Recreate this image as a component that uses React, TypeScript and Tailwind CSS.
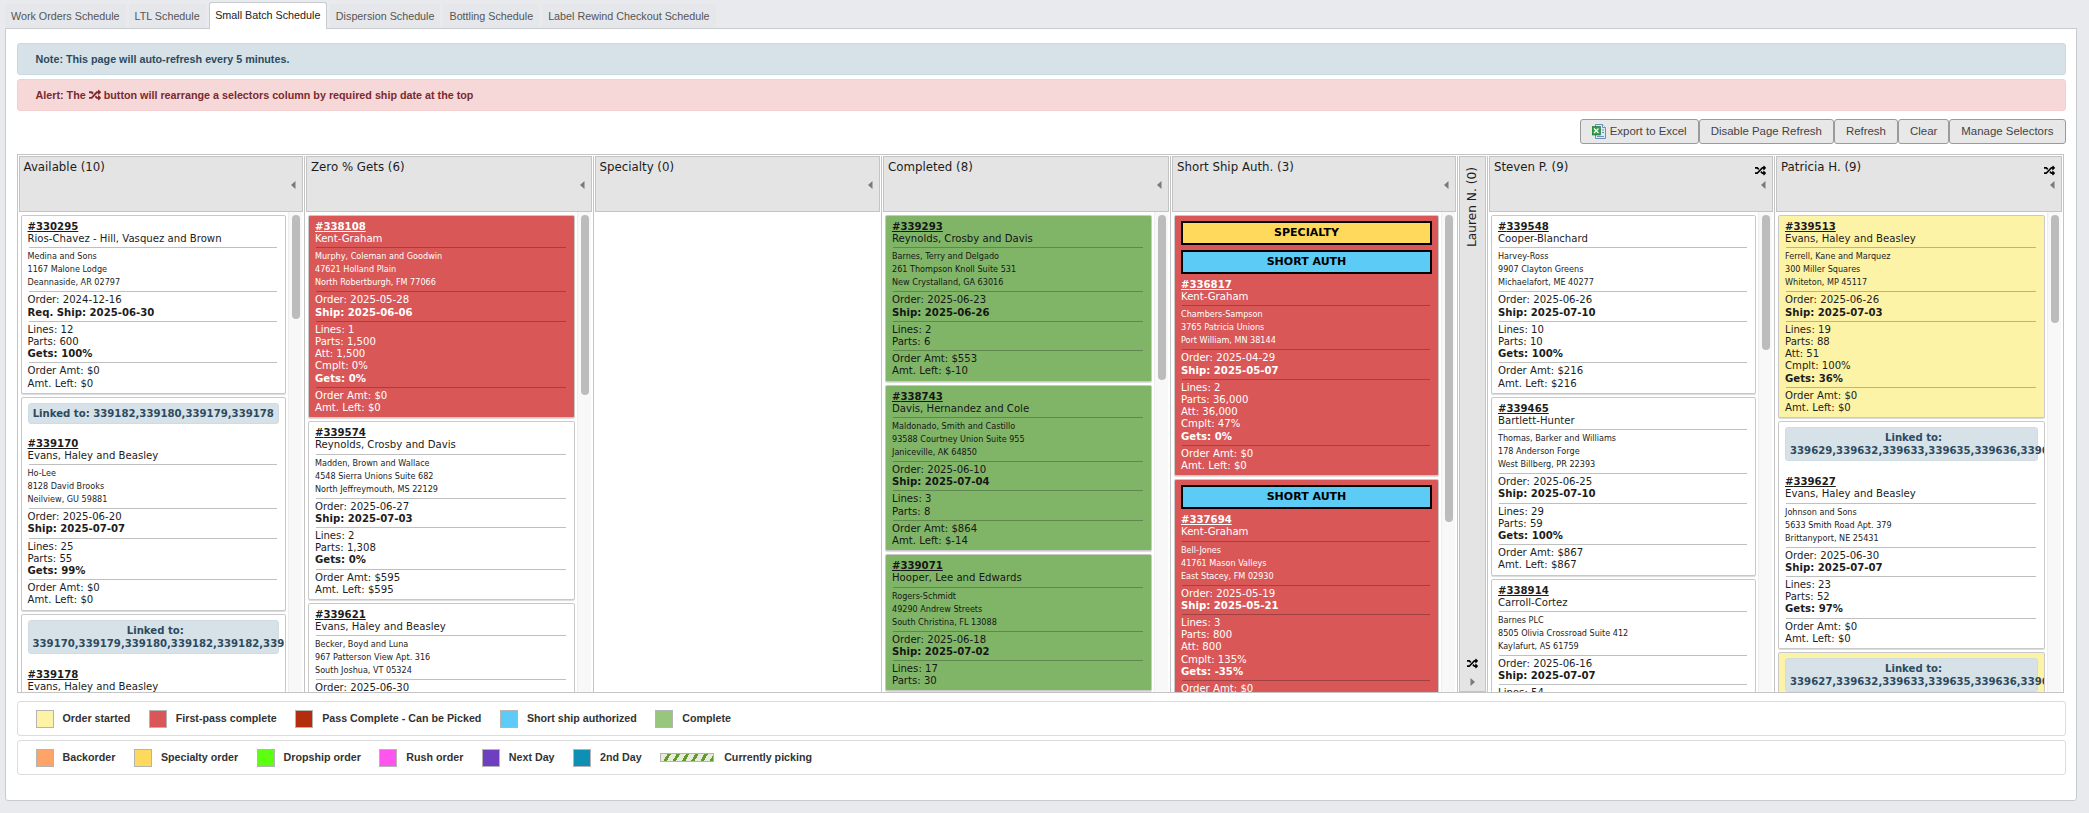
import { FaRandom } from 'react-icons/fa'

type Tone = 'plain' | 'red' | 'green' | 'yellow'

interface Order {
  id: string
  name?: string
  addr?: string[]
  order?: string
  ship?: string
  reqShip?: string
  stats?: string[]
  gets?: string
  amt?: string
  left?: string
  tone?: Tone
  badges?: ('specialty' | 'short')[]
  linked?: string
  linkedWrap?: string
  linkedOnly?: boolean
}

interface Column {
  title: string
  width: string
  shuffle?: boolean
  thumb?: string
  orders: Order[]
}

const tabs = [
  'Work Orders Schedule',
  'LTL Schedule',
  'Small Batch Schedule',
  'Dispersion Schedule',
  'Bottling Schedule',
  'Label Rewind Checkout Schedule',
]

const toneClass: Record<Tone, string> = {
  plain: 'bg-white text-[#1c1c1c]',
  red: 'bg-[#d95757] text-white',
  green: 'bg-[#80b567] text-[#161616]',
  yellow: 'bg-[#fdf3a6] text-[#1c1c1c]',
}

const left: Order[] = [
  {
    id: '330295',
    name: 'Rios-Chavez - Hill, Vasquez and Brown',
    addr: ['Medina and Sons', '1167 Malone Lodge', 'Deannaside, AR 02797'],
    order: '2024-12-16',
    reqShip: '2025-06-30',
    stats: ['Lines: 12', 'Parts: 600'],
    gets: '100%',
    amt: '$0',
    left: '$0',
  },
  {
    id: '339170',
    linked: '339182,339180,339179,339178',
    name: 'Evans, Haley and Beasley',
    addr: ['Ho-Lee', '8128 David Brooks', 'Neilview, GU 59881'],
    order: '2025-06-20',
    ship: '2025-07-07',
    stats: ['Lines: 25', 'Parts: 55'],
    gets: '99%',
    amt: '$0',
    left: '$0',
  },
  {
    id: '339178',
    linkedWrap: '339170,339179,339180,339182,339182,3391',
    name: 'Evans, Haley and Beasley',
  },
]

const zero: Order[] = [
  {
    id: '338108',
    tone: 'red',
    name: 'Kent-Graham',
    addr: ['Murphy, Coleman and Goodwin', '47621 Holland Plain', 'North Robertburgh, FM 77066'],
    order: '2025-05-28',
    ship: '2025-06-06',
    stats: ['Lines: 1', 'Parts: 1,500', 'Att: 1,500', 'Cmplt: 0%'],
    gets: '0%',
    amt: '$0',
    left: '$0',
  },
  {
    id: '339574',
    name: 'Reynolds, Crosby and Davis',
    addr: ['Madden, Brown and Wallace', '4548 Sierra Unions Suite 682', 'North Jeffreymouth, MS 22129'],
    order: '2025-06-27',
    ship: '2025-07-03',
    stats: ['Lines: 2', 'Parts: 1,308'],
    gets: '0%',
    amt: '$595',
    left: '$595',
  },
  {
    id: '339621',
    name: 'Evans, Haley and Beasley',
    addr: ['Becker, Boyd and Luna', '967 Patterson View Apt. 316', 'South Joshua, VT 05324'],
    order: '2025-06-30',
  },
]

const completed: Order[] = [
  {
    id: '339293',
    tone: 'green',
    name: 'Reynolds, Crosby and Davis',
    addr: ['Barnes, Terry and Delgado', '261 Thompson Knoll Suite 531', 'New Crystalland, GA 63016'],
    order: '2025-06-23',
    ship: '2025-06-26',
    stats: ['Lines: 2', 'Parts: 6'],
    amt: '$553',
    left: '$-10',
  },
  {
    id: '338743',
    tone: 'green',
    name: 'Davis, Hernandez and Cole',
    addr: ['Maldonado, Smith and Castillo', '93588 Courtney Union Suite 955', 'Janiceville, AK 64850'],
    order: '2025-06-10',
    ship: '2025-07-04',
    stats: ['Lines: 3', 'Parts: 8'],
    amt: '$864',
    left: '$-14',
  },
  {
    id: '339071',
    tone: 'green',
    name: 'Hooper, Lee and Edwards',
    addr: ['Rogers-Schmidt', '49290 Andrew Streets', 'South Christina, FL 13088'],
    order: '2025-06-18',
    ship: '2025-07-02',
    stats: ['Lines: 17', 'Parts: 30'],
  },
]

const shortShip: Order[] = [
  {
    id: '336817',
    tone: 'red',
    badges: ['specialty', 'short'],
    name: 'Kent-Graham',
    addr: ['Chambers-Sampson', '3765 Patricia Unions', 'Port William, MN 38144'],
    order: '2025-04-29',
    ship: '2025-05-07',
    stats: ['Lines: 2', 'Parts: 36,000', 'Att: 36,000', 'Cmplt: 47%'],
    gets: '0%',
    amt: '$0',
    left: '$0',
  },
  {
    id: '337694',
    tone: 'red',
    badges: ['short'],
    name: 'Kent-Graham',
    addr: ['Bell-Jones', '41761 Mason Valleys', 'East Stacey, FM 02930'],
    order: '2025-05-19',
    ship: '2025-05-21',
    stats: ['Lines: 3', 'Parts: 800', 'Att: 800', 'Cmplt: 135%'],
    gets: '-35%',
    amt: '$0',
  },
]

const steven: Order[] = [
  {
    id: '339548',
    name: 'Cooper-Blanchard',
    addr: ['Harvey-Ross', '9907 Clayton Greens', 'Michaelafort, ME 40277'],
    order: '2025-06-26',
    ship: '2025-07-10',
    stats: ['Lines: 10', 'Parts: 10'],
    gets: '100%',
    amt: '$216',
    left: '$216',
  },
  {
    id: '339465',
    name: 'Bartlett-Hunter',
    addr: ['Thomas, Barker and Williams', '178 Anderson Forge', 'West Billberg, PR 22393'],
    order: '2025-06-25',
    ship: '2025-07-10',
    stats: ['Lines: 29', 'Parts: 59'],
    gets: '100%',
    amt: '$867',
    left: '$867',
  },
  {
    id: '338914',
    name: 'Carroll-Cortez',
    addr: ['Barnes PLC', '8505 Olivia Crossroad Suite 412', 'Kaylafurt, AS 61759'],
    order: '2025-06-16',
    ship: '2025-07-07',
    stats: ['Lines: 54'],
  },
]

const patricia: Order[] = [
  {
    id: '339513',
    tone: 'yellow',
    name: 'Evans, Haley and Beasley',
    addr: ['Ferrell, Kane and Marquez', '300 Miller Squares', 'Whiteton, MP 45117'],
    order: '2025-06-26',
    ship: '2025-07-03',
    stats: ['Lines: 19', 'Parts: 88', 'Att: 51', 'Cmplt: 100%'],
    gets: '36%',
    amt: '$0',
    left: '$0',
  },
  {
    id: '339627',
    linkedWrap: '339629,339632,339633,339635,339636,3396',
    name: 'Evans, Haley and Beasley',
    addr: ['Johnson and Sons', '5633 Smith Road Apt. 379', 'Brittanyport, NE 25431'],
    order: '2025-06-30',
    ship: '2025-07-07',
    stats: ['Lines: 23', 'Parts: 52'],
    gets: '97%',
    amt: '$0',
    left: '$0',
  },
  {
    id: '339629',
    tone: 'yellow',
    linkedOnly: true,
    linkedWrap: '339627,339632,339633,339635,339636,3396',
  },
]

const columns: Column[] = [
  { title: 'Available (10)', width: 'w-[287.5px]', thumb: 'h-[104px]', orders: left },
  { title: 'Zero % Gets (6)', width: 'w-[288.5px]', thumb: 'h-[180px]', orders: zero },
  { title: 'Specialty (0)', width: 'w-[288.5px]', orders: [] },
  { title: 'Completed (8)', width: 'w-[289px]', thumb: 'h-[165px]', orders: completed },
  { title: 'Short Ship Auth. (3)', width: 'w-[287px]', thumb: 'h-[307px]', orders: shortShip },
]

const rightColumns: Column[] = [
  { title: 'Steven P. (9)', width: 'w-[287px]', shuffle: true, thumb: 'h-[135px]', orders: steven },
  { title: 'Patricia H. (9)', width: 'w-[288px]', shuffle: true, thumb: 'h-[108px]', orders: patricia },
]

function Arrow({ dir = 'left' }: { dir?: 'left' | 'right' }) {
  return (
    <svg width="5" height="8" viewBox="0 0 5 8" className="block">
      <path d={dir === 'left' ? 'M4.5 0v8L0 4z' : 'M.5 0v8L5 4z'} fill="#7a7a7a" />
    </svg>
  )
}

function Rule() {
  return <div className="ml-px mr-[2px] my-[2px] border-t border-black/25" />
}

function OrderCard({ o }: { o: Order }) {
  const tone = o.tone ?? 'plain'
  return (
    <div
      className={`shrink-0 overflow-hidden rounded-[2px] border border-[#c9c9c9] px-[6px] pt-[5px] pb-[3px] text-[10.15px] leading-[12.2px] shadow-[0_1px_1px_rgba(0,0,0,0.15)] ${toneClass[tone]}`}
    >
      {o.badges?.map((b) => (
        <div
          key={b}
          className={`mb-[5px] flex h-[24px] items-center justify-center border-2 border-black text-[11px] font-bold text-black ${b === 'specialty' ? 'bg-[#ffd95c]' : 'bg-[#5ccbf5]'}`}
        >
          {b === 'specialty' ? 'SPECIALTY' : 'SHORT AUTH'}
        </div>
      ))}
      {o.linked && (
        <div className="mb-[14px] rounded-[3px] border border-[#cfdde3] bg-[#d6e2e7] py-[3px] text-center font-bold leading-[13px] whitespace-nowrap text-[#2d4a5f]">
          Linked to: {o.linked}
        </div>
      )}
      {o.linkedWrap && (
        <div className="mb-[15px] rounded-[3px] border border-[#cfdde3] bg-[#d6e2e7] py-[3px] pl-[4px] font-bold leading-[13px] whitespace-nowrap text-[#2d4a5f]">
          <div className="text-center">Linked to:</div>
          <div>{o.linkedWrap}</div>
        </div>
      )}
      {!o.linkedOnly && (
        <>
          <a className="block font-bold underline">#{o.id}</a>
          <div>{o.name}</div>
        </>
      )}
      {o.addr && (
        <>
          <Rule />
          <div className="text-[8.1px] leading-[13px]">
            {o.addr.map((line) => (
              <div key={line}>{line}</div>
            ))}
          </div>
        </>
      )}
      {o.order && (
        <>
          <Rule />
          <div>Order: {o.order}</div>
        </>
      )}
      {o.reqShip && <div className="font-bold">Req. Ship: {o.reqShip}</div>}
      {o.ship && <div className="font-bold">Ship: {o.ship}</div>}
      {o.stats && <Rule />}
      {o.stats?.map((s) => (
        <div key={s}>{s}</div>
      ))}
      {o.gets && <div className="font-bold">Gets: {o.gets}</div>}
      {o.amt && (
        <>
          <Rule />
          <div>Order Amt: {o.amt}</div>
          {o.left && <div>Amt. Left: {o.left}</div>}
        </>
      )}
    </div>
  )
}

function BoardColumn({ col }: { col: Column }) {
  return (
    <div className={`flex shrink-0 flex-col border-r border-[#c4c4c4] last:border-r-0 ${col.width}`}>
      <div className="mx-px flex h-[56px] shrink-0 justify-between border border-[#c4c4c4] bg-[#e4e4e4] pl-[4px] pr-[6px] pt-[3px] text-[11.8px] leading-[14px] text-[#1c1c1c]">
        <span>{col.title}</span>
        <div className="flex flex-col items-end">
          {col.shuffle ? (
            <FaRandom className="mt-[5px] text-[11px] text-black" />
          ) : (
            <span className="h-[16px]" />
          )}
          <span className="mt-[5px] block">
            <Arrow />
          </span>
        </div>
      </div>
      <div className="flex min-h-0 flex-1 overflow-hidden pl-[3px]">
        <div className="flex min-w-0 flex-1 flex-col gap-[3px] overflow-hidden pt-[3px]">
          {col.orders.map((o) => (
            <OrderCard key={o.id} o={o} />
          ))}
        </div>
        {col.thumb && (
          <div className="ml-[2px] mr-[2px] w-[14px] shrink-0 border-l border-[#eeeeee] bg-[#f8f8f8] pl-[3px] pt-[3px]">
            <div className={`w-[8px] rounded-[4px] bg-[#bcbcbc] ${col.thumb}`} />
          </div>
        )}
      </div>
    </div>
  )
}

function Swatch({ color, label }: { color: string; label: string }) {
  return (
    <div className="flex items-center gap-[9px]">
      <span className={`h-[18px] w-[18px] border border-[#b4b4b4] ${color}`} />
      <span>{label}</span>
    </div>
  )
}

function ExcelIcon() {
  return (
    <svg width="14" height="15" viewBox="0 0 14 15">
      <path d="M3.5.5h7l3 3v11h-10z" fill="#dfe9f6" stroke="#6d8fc0" />
      <path d="M10.5.5v3h3" fill="#fff" stroke="#6d8fc0" />
      <rect x="0" y="2.5" width="8.5" height="8.5" fill="#2f9e44" stroke="#1d6f2e" strokeWidth=".6" />
      <path d="M2 4.5l4.5 4.5M6.5 4.5L2 9" stroke="#fff" strokeWidth="1.3" />
      <path d="M5 12.5h7M10 6h2M10 8.5h2" stroke="#6d8fc0" />
    </svg>
  )
}

export default function App() {
  return (
    <div className="h-[813px] w-[2089px] overflow-hidden bg-[#e8eaee] font-['Liberation_Sans',sans-serif]">
      <div className="flex h-[28px] items-end gap-[3px] pl-[5px]">
        {tabs.map((t) =>
          t === 'Small Batch Schedule' ? (
            <div
              key={t}
              className="relative z-10 -mb-px flex h-[27px] items-center rounded-t-[3px] border border-b-0 border-[#c8cbd0] bg-white px-[5.5px] pb-[2px] text-[10.75px] text-[#222]"
            >
              {t}
            </div>
          ) : (
            <div
              key={t}
              className="flex h-[24px] items-center bg-[#e6e7ea] px-[6px] text-[10.75px] text-[#555]"
            >
              {t}
            </div>
          ),
        )}
      </div>

      <div className="ml-[5px] flex h-[773px] w-[2072px] flex-col rounded-b-[3px] border border-[#c8cbd0] bg-white px-[10.5px] pt-[14px]">
        <div className="flex h-[32px] items-center rounded-[3px] border border-[#c9dbe2] bg-[#d6e2e7] pl-[18px] text-[10.75px] font-bold text-[#2d4a5f]">
          Note: This page will auto-refresh every 5 minutes.
        </div>
        <div className="mt-[4px] flex h-[32px] items-center gap-[3px] rounded-[3px] border border-[#f3cfd1] bg-[#f6d8d9] pl-[18px] text-[10.75px] font-bold text-[#7a2a2e]">
          Alert: The <FaRandom className="text-[12px]" /> button will rearrange a selectors column by required ship date at the top
        </div>

        <div className="mt-[8px] flex justify-end text-[11.45px] text-[#444]">
          {['Export to Excel', 'Disable Page Refresh', 'Refresh', 'Clear', 'Manage Selectors'].map((b, i) => (
            <button
              key={b}
              className="flex h-[25px] items-center gap-[4px] rounded-[3px] border border-[#9a9a9a] bg-[#e8e8e8] px-[11px]"
            >
              {i === 0 && <ExcelIcon />}
              {b}
            </button>
          ))}
        </div>

        <div className="mt-[10px] mr-[2px] flex h-[539px] shrink-0 overflow-hidden border border-[#c4c4c4] pt-px font-['DejaVu_Sans',sans-serif]">
          {columns.map((c) => (
            <BoardColumn key={c.title} col={c} />
          ))}
          <div className="flex w-[30px] shrink-0 flex-col border-r border-[#c4c4c4]">
            <div className="mx-px flex flex-1 flex-col items-center border border-[#c4c4c4] bg-[#e4e4e4] pt-[10px] text-[12.2px] text-[#1c1c1c]">
              <span className="rotate-180 whitespace-nowrap [writing-mode:vertical-rl]">Lauren N. (0)</span>
              <FaRandom className="mt-auto text-[11px] text-black" />
              <span className="mt-[9px] mb-[5px] block">
                <Arrow dir="right" />
              </span>
            </div>
          </div>
          {rightColumns.map((c) => (
            <BoardColumn key={c.title} col={c} />
          ))}
        </div>

        <div className="mt-[8px] flex h-[35px] shrink-0 items-center gap-[18.5px] rounded-[3px] border border-[#dcdcdc] pl-[18px] text-[10.7px] font-bold text-[#333]">
          <Swatch color="bg-[#fdf3a6]" label="Order started" />
          <Swatch color="bg-[#d95757]" label="First-pass complete" />
          <Swatch color="bg-[#b32d0f]" label="Pass Complete - Can be Picked" />
          <Swatch color="bg-[#5ccbf5]" label="Short ship authorized" />
          <Swatch color="bg-[#96c77c]" label="Complete" />
        </div>
        <div className="mt-[4px] flex h-[35px] shrink-0 items-center gap-[18.5px] rounded-[3px] border border-[#dcdcdc] pl-[18px] text-[10.7px] font-bold text-[#333]">
          <Swatch color="bg-[#ffa468]" label="Backorder" />
          <Swatch color="bg-[#ffd95c]" label="Specialty order" />
          <Swatch color="bg-[#5cff10]" label="Dropship order" />
          <Swatch color="bg-[#ff55ee]" label="Rush order" />
          <Swatch color="bg-[#6e3fc0]" label="Next Day" />
          <Swatch color="bg-[#0f8fb3]" label="2nd Day" />
          <div className="flex items-center gap-[10px]">
            <span className="h-[9px] w-[54px] border border-[#b4b4b4] bg-[repeating-linear-gradient(-60deg,#5f9a2a_0,#5f9a2a_3px,#e6ecd9_3px,#e6ecd9_8px)]" />
            <span>Currently picking</span>
          </div>
        </div>
      </div>
    </div>
  )
}
